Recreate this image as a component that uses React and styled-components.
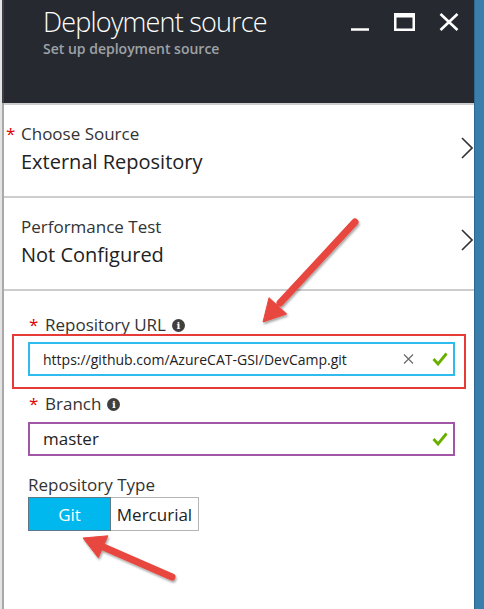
import React from "react";
import styled, { createGlobalStyle } from "styled-components";

const Global = createGlobalStyle`
  html, body { margin: 0; padding: 0; background: #ffffff; }
  body { font-family: "Open Sans", "Noto Sans", "Liberation Sans", sans-serif; }
  * { box-sizing: border-box; }
`;

const Frame = styled.div`
  position: relative;
  width: 484px;
  height: 609px;
  display: flex;
  overflow: hidden;
  background: #e6e6e6;
`;

const Gutter = styled.div`
  width: 2px;
  flex: none;
  background: #e4e4e4;
`;

const Blade = styled.div`
  flex: 1;
  display: flex;
  flex-direction: column;
  background: #ffffff;
  border-left: 2px solid #a9a9a9;
`;

const SideStrip = styled.div`
  width: 10px;
  flex: none;
  background: #3a7eab;
  border-left: 1px solid #2d668e;
`;

const Header = styled.header`
  height: 103px;
  margin-left: -2px;
  border-left: 2px solid #3d4147;
  background: #262a30;
  display: flex;
  align-items: flex-start;
  padding: 3px 13px 0 39px;
`;

const TitleBlock = styled.div`
  flex: 1;
  display: flex;
  flex-direction: column;
`;

const Title = styled.h1`
  margin: 0;
  font-size: 27px;
  font-weight: 300;
  line-height: 37px;
  letter-spacing: -0.8px;
  color: #ffffff;
`;

const Subtitle = styled.div`
  font-size: 14px;
  font-weight: 600;
  line-height: 14px;
  margin-top: 2px;
  color: #9ea2a7;
`;

const Controls = styled.div`
  display: flex;
  gap: 21px;
  margin-top: 9px;
`;

const ControlButton = styled.div`
  width: 24px;
  height: 20px;
  display: flex;
  svg { display: block; }
`;

const NavRow = styled.div`
  height: 93px;
  border-top: 2px solid #cdcdcd;
  display: flex;
  padding: 17px 1px 0 2px;
`;

const NavText = styled.div`
  flex: 1;
  display: flex;
  flex-direction: column;
  padding-left: 15px;
`;

const NavLabel = styled.div`
  display: flex;
  font-size: 17px;
  line-height: 23px;
  color: #333333;
`;

const Star = styled.span`
  color: #e00000;
  font-size: 17px;
  width: ${(p) => p.$w}px;
  flex: none;
  margin-left: ${(p) => p.$ml || 0}px;
`;

const NavValue = styled.div`
  font-size: 20px;
  line-height: 28px;
  margin-top: 3px;
  color: #222222;
`;

const Chevron = styled.svg`
  margin-top: ${(p) => p.$top}px;
  flex: none;
`;

const Form = styled.div`
  flex: 1;
  border-top: 2px solid #cdcdcd;
  padding: 22px 19px 0 24px;
  display: flex;
  flex-direction: column;
`;

const FieldLabel = styled.div`
  display: flex;
  align-items: center;
  font-size: 17px;
  line-height: 23px;
  color: #333333;
  margin-top: ${(p) => p.$mt || 0}px;
`;

const InfoIcon = styled.span`
  width: 13px;
  height: 13px;
  border-radius: 50%;
  background: #3f3f3f;
  color: #ffffff;
  font-family: "DejaVu Serif", serif;
  font-weight: 700;
  font-size: 10px;
  line-height: 13px;
  text-align: center;
  margin-left: 6px;
  margin-top: 1px;
`;

const Input = styled.div`
  height: 34px;
  margin-top: ${(p) => p.$mt}px;
  border: 2px solid ${(p) => p.$border};
  display: flex;
  align-items: center;
  padding: 0 5px 0 13px;
`;

const InputText = styled.div`
  flex: 1;
  font-size: ${(p) => p.$size}px;
  line-height: 30px;
  padding-top: ${(p) => p.$pt || 0}px;
  color: #222222;
`;

const InputIcon = styled.svg`
  flex: none;
  margin-left: ${(p) => p.$ml || 0}px;
  display: block;
`;

const Segmented = styled.div`
  display: flex;
  margin-top: 1px;
`;

const Segment = styled.div`
  height: 34px;
  width: ${(p) => p.$w}px;
  display: flex;
  align-items: center;
  justify-content: center;
  font-size: 17px;
  border: 1px solid ${(p) => (p.$active ? "#5b7788" : "#b5b5b5")};
  border-left-width: ${(p) => (p.$active ? 1 : 0)}px;
  background: ${(p) => (p.$active ? "#00b7ee" : "#ffffff")};
  color: ${(p) => (p.$active ? "#ffffff" : "#222222")};
`;

const Overlay = styled.svg`
  position: absolute;
  left: 0;
  top: 0;
  pointer-events: none;
`;

function ChevronIcon({ top }) {
  return (
    <Chevron $top={top} width="12" height="22" viewBox="0 0 12 22">
      <polyline points="1,1 11,11 1,21" fill="none" stroke="#333" strokeWidth="1.6" />
    </Chevron>
  );
}

function Check() {
  return (
    <InputIcon $ml={18} width="16" height="14" viewBox="0 0 16 14">
      <polyline points="1.5,7 6,12 14.5,1.5" fill="none" stroke="#68b000" strokeWidth="2.8" />
    </InputIcon>
  );
}

export default function App() {
  return (
    <>
      <Global />
      <Frame>
        <Gutter />
        <Blade>
          <Header>
            <TitleBlock>
              <Title>Deployment source</Title>
              <Subtitle>Set up deployment source</Subtitle>
            </TitleBlock>
            <Controls>
              <ControlButton>
                <svg width="24" height="20" viewBox="0 0 24 20">
                  <line x1="4" y1="17.5" x2="22" y2="17.5" stroke="#fff" strokeWidth="2.5" />
                </svg>
              </ControlButton>
              <ControlButton>
                <svg width="24" height="20" viewBox="0 0 24 20">
                  <path d="M2 1 H23 V19 H2 Z M4.5 5.5 V16.5 H20.5 V5.5 Z" fill="#fff" fillRule="evenodd" />
                </svg>
              </ControlButton>
              <ControlButton>
                <svg width="24" height="20" viewBox="0 0 24 20">
                  <path d="M3.5 2 L20.5 18 M20.5 2 L3.5 18" stroke="#fff" strokeWidth="2.6" />
                </svg>
              </ControlButton>
            </Controls>
          </Header>

          <NavRow>
            <NavText>
              <NavLabel>
                <Star $w={15} $ml={-15}>*</Star>
                Choose Source
              </NavLabel>
              <NavValue>External Repository</NavValue>
            </NavText>
            <ChevronIcon top={15} />
          </NavRow>

          <NavRow>
            <NavText>
              <NavLabel>Performance Test</NavLabel>
              <NavValue>Not Configured</NavValue>
            </NavText>
            <ChevronIcon top={14} />
          </NavRow>

          <Form>
            <FieldLabel>
              <Star $w={16} $ml={1}>*</Star>
              Repository URL
              <InfoIcon>i</InfoIcon>
            </FieldLabel>
            <Input $mt={6} $border="#2fbbee">
              <InputText $size={14} $pt={2}>https://github.com/AzureCAT-GSI/DevCamp.git</InputText>
              <InputIcon width="11" height="10" viewBox="0 0 11 10">
                <path d="M1 0.5 L10 9.5 M10 0.5 L1 9.5" stroke="#6a6a6a" strokeWidth="1.2" />
              </InputIcon>
              <Check />
            </Input>

            <FieldLabel $mt={16}>
              <Star $w={16} $ml={1}>*</Star>
              Branch
              <InfoIcon>i</InfoIcon>
            </FieldLabel>
            <Input $mt={7} $border="#a257a6">
              <InputText $size={17}>master</InputText>
              <Check />
            </Input>

            <FieldLabel $mt={17}>Repository Type</FieldLabel>
            <Segmented>
              <Segment $active $w={83}>Git</Segment>
              <Segment $w={88}>Mercurial</Segment>
            </Segmented>
          </Form>
        </Blade>
        <SideStrip />

        <Overlay width="484" height="609" viewBox="0 0 484 609">
          <defs>
            <filter id="sh" x="-20%" y="-20%" width="140%" height="140%">
              <feDropShadow dx="1" dy="2" stdDeviation="1.2" floodColor="#000" floodOpacity="0.35" />
            </filter>
          </defs>
          <rect x="13" y="335" width="452" height="53" fill="none" stroke="#e53a35" strokeWidth="2" />
          <g filter="url(#sh)" fill="#e8473f" stroke="#e8473f">
            <line x1="355" y1="222" x2="280" y2="303" strokeWidth="7" strokeLinecap="round" />
            <polygon points="263,322 269,297.7 286.7,313.9" strokeWidth="1" strokeLinejoin="round" />
            <line x1="172" y1="577" x2="101" y2="546" strokeWidth="7" strokeLinecap="round" />
            <polygon points="83,538 107.9,535.8 98.3,557.8" strokeWidth="1" strokeLinejoin="round" />
          </g>
        </Overlay>
      </Frame>
    </>
  );
}
